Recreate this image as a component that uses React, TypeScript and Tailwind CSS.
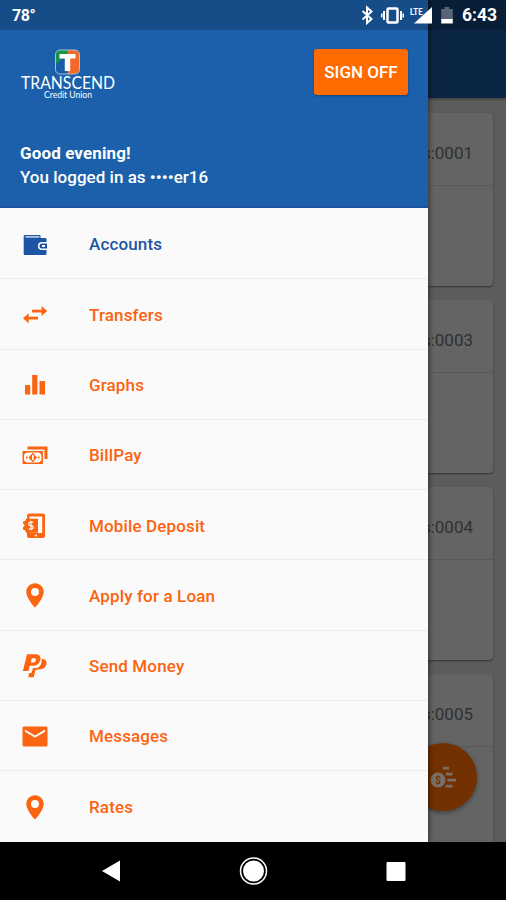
import type { ReactNode } from "react";

const accounts = [
  { id: "s:0001" },
  { id: "s:0003" },
  { id: "s:0004" },
  { id: "s:0005" },
];

function Icon({ children }: { children: ReactNode }) {
  return (
    <svg viewBox="0 0 28 28" className="h-7 w-7 shrink-0" fill="currentColor">
      {children}
    </svg>
  );
}

const Wallet = () => (
  <Icon>
    <path d="M4 4h14.500a1 1 0 0 1 1 1v2h5a1 1 0 0 1 1 1V11h-4.600a4 4 0 0 0 0 8h4.600v4a1 1 0 0 1-1 1H3.700a1 1 0 0 1-1-1V5.300A1.300 1.300 0 0 1 4 4Z" />
    <path d="M4.500 5.300h14v1.200h-14z" fill="#fafafa" />
    <path d="M21 12.500h5v5h-5a2.500 2.500 0 0 1 0-5Z" />
    <path d="M21 14h3v2h-3z" fill="#fafafa" />
  </Icon>
);

const Transfers = () => (
  <Icon>
    <path d="M11 9.300h9.500V5.700l5.700 5-5.700 5v-3.600H11zM17 16.400H7.700v-3.600L2 17.800l5.700 5v-3.600H17z" transform="translate(0 -.6)" />
  </Icon>
);

const Graphs = () => (
  <Icon>
    <path d="M4 14h5.200v9.500H4zM11.200 4h5.200v19.500h-5.200zM18.500 10H24v13.500h-5.500z" />
  </Icon>
);

const Bills = () => (
  <Icon>
    <path d="M6.500 4.500h20V17h-3V7.500h-17z" />
    <path d="M2.300 9.700h18.900v11.500H2.300z" fill="none" stroke="currentColor" strokeWidth="1.500" />
    <path d="M2 9.500h4.500L2 13.500zM21.500 9.500H17l4.500 4zM2 21.500h4.500l-4.500-4zM21.500 21.500H17l4.500-4z" />
    <path fillRule="evenodd" d="m11.800 10.800 4.300 4.700-4.300 4.700-4.300-4.700zM11 13v5h1.700v-5z" />
    <path d="M5 14.500h1.500v2H5zM17 14.500h1.500v2H17z" />
  </Icon>
);

const Deposit = () => (
  <Icon>
    <path fillRule="evenodd" d="M8 1.500h14a2 2 0 0 1 2 2V24a2 2 0 0 1-2 2H8a2 2 0 0 1-2-2V3.500a2 2 0 0 1 2-2Zm.5 3V21h12.700V4.500Z" />
    <path d="M5 6.700h12v14H5a3 3 0 0 0-3-3v-3a1.500 1.500 0 0 0 0-3V9.500a3 3 0 0 0 3-2.800Z" />
    <path d="M12.200 10.200H9.400a1.600 1.600 0 0 0 0 3.400h1a1.600 1.600 0 0 1 0 3.400H7.700M10 8.800v9.500" fill="none" stroke="#fafafa" strokeWidth="1.200" />
    <circle cx="15" cy="23.500" r="1" fill="#fafafa" />
  </Icon>
);

const Pin = () => (
  <Icon>
    <path fillRule="evenodd" d="M14 1.300c-4.800 0-8.700 3.800-8.700 8.600 0 6.600 8.700 15.600 8.700 15.600s8.700-9 8.700-15.600c0-4.800-3.900-8.600-8.700-8.600Zm0 4.700a4 4 0 1 1 0 8 4 4 0 0 1 0-8Z" />
  </Icon>
);

const PayPal = () => (
  <Icon>
    <path fillRule="evenodd" d="M6 2.200h8.500c4 0 5.600 2.300 4.900 5.600-.9 4.200-3.700 6-7.800 6H8.700L7.400 19H1.900ZM10.800 6.200l-.9 4.300h2c1.700 0 2.700-.7 3-2.200.3-1.400-.3-2.100-1.900-2.100Z" />
    <path d="M20.900 6.800c3.100.2 5.200 2.200 4.600 5-.8 4-3.500 5.700-7.600 5.700h-3.200l-2 7.800H7.200l1-4.300h2.200l1.700-5h2.800c3.700 0 6-3.600 6-9.200Z" />
  </Icon>
);

const Mail = () => (
  <Icon>
    <path fillRule="evenodd" d="M3 3.500h22a1.500 1.500 0 0 1 1.500 1.500v17a1.500 1.500 0 0 1-1.500 1.500H3A1.500 1.500 0 0 1 1.500 22V5A1.500 1.500 0 0 1 3 3.500Zm1 3v2.200l10 6.100 10-6.100V6.500l-10 6.100Z" />
  </Icon>
);

const menu = [
  { label: "Accounts", icon: <Wallet />, active: true },
  { label: "Transfers", icon: <Transfers /> },
  { label: "Graphs", icon: <Graphs /> },
  { label: "BillPay", icon: <Bills /> },
  { label: "Mobile Deposit", icon: <Deposit /> },
  { label: "Apply for a Loan", icon: <Pin /> },
  { label: "Send Money", icon: <PayPal /> },
  { label: "Messages", icon: <Mail /> },
  { label: "Rates", icon: <Pin /> },
];

function Logo() {
  return (
    <svg viewBox="0 0 96 54" className="h-[54px] w-24 overflow-visible" fill="white">
      <clipPath id="badge">
        <rect x="35.500" y="1" width="24" height="24" rx="4.500" />
      </clipPath>
      <g clipPath="url(#badge)">
        <path d="M35 0h13v26H35z" fill="#175ca9" />
        <path d="M35 0h13v5L35 16z" fill="#159447" />
        <path d="M47.500 0H60v26H47.500z" fill="#f26a2a" />
      </g>
      <rect x="35.500" y="1" width="24" height="24" rx="4.500" fill="none" stroke="#a9bfd5" />
      <path d="M39.500 5h16v4.500h-5.300V22h-5.400V9.500h-5.300z" />
      <text x="1" y="40" fontFamily="Lato, sans-serif" fontSize="17" textLength="94" lengthAdjust="spacingAndGlyphs">TRANSCEND</text>
      <text x="24" y="49" fontFamily="Lato, sans-serif" fontSize="9" textLength="48" lengthAdjust="spacingAndGlyphs">Credit Union</text>
    </svg>
  );
}

function StatusBar() {
  return (
    <div className="absolute inset-x-0 top-0 flex h-[30px] items-center bg-black/20 pl-3 pr-[9px] text-white">
      <span className="pt-0.5 text-[16px] font-bold tracking-tight">78°</span>
      <svg viewBox="0 0 96 22" className="ml-auto h-[22px] w-24" fill="white">
        <path d="m1.500 7 9 8-4.500 4V3.500l4.500 4-9 8" fill="none" stroke="white" strokeWidth="2" />
        <rect x="26.500" y="4.500" width="10" height="14" rx="1" fill="none" stroke="white" strokeWidth="2.500" />
        <path d="M22 7h2v9h-2zM39 7h2v9h-2zM20 9.500h1.500v4H20zM41.500 9.500H43v4h-1.500z" />
        <path d="M71 3v16.500H53z" />
        <text x="49" y="10.500" fontFamily="Roboto, sans-serif" fontSize="9" fontWeight="700" textLength="12.500" lengthAdjust="spacingAndGlyphs">LTE</text>
        <path d="M83.500 3h4.800v2h3.500v10H80.200V5h3.300z" fillOpacity=".32" />
        <path d="M80.200 15h11.600v4.500H80.200z" />
      </svg>
      <span className="ml-[5px] pt-0.5 text-[17.500px] font-bold leading-none">6:43</span>
    </div>
  );
}

function Drawer() {
  return (
    <aside className="absolute left-0 top-0 flex h-[842px] w-[428px] flex-col bg-[#fafafa] shadow-[1px_0_5px_rgba(0,0,0,0.55)]">
      <header className="flex h-[208px] flex-col border-b-2 border-[#17529a] bg-[#1c5faa] pl-5 pr-5 pt-[49px] text-white">
        <div className="flex h-[52px] items-start justify-between">
          <Logo />
          <button className="h-[46px] w-[94px] rounded-[3px] bg-[#ff6b00] pt-0.5 text-[17px] font-medium shadow-[0_1px_2px_rgba(0,0,0,0.3)]">SIGN OFF</button>
        </div>
        <div className="mt-10 text-[17px] leading-6">
          <p className="font-bold tracking-[0.12px]">Good evening!</p>
          <p className="font-medium tracking-[0.02px]">You logged in as ••••er16</p>
        </div>
      </header>
      <nav className="flex flex-col pt-px">
        {menu.map((item) => (
          <a
            key={item.label}
            className={`flex h-[70.3px] items-center border-b border-[#ececec] pl-[21px] pt-[2px] text-[17px] font-medium tracking-[0.14px] last:border-b-0 ${item.active ? "text-[#1c55a3]" : "text-[#fb6410]"}`}
          >
            {item.icon}
            <span className="ml-10 pt-px">{item.label}</span>
          </a>
        ))}
      </nav>
    </aside>
  );
}

function FloatingButton() {
  return (
    <div className="absolute left-[409px] top-[743px] flex h-[68px] w-[68px] items-center justify-center rounded-full bg-[#733000] shadow-[0_2px_5px_rgba(0,0,0,0.35)]">
      <svg viewBox="0 0 30 26" className="h-[26px] w-[30px]" fill="#777068">
        <circle cx="10" cy="16" r="7.500" />
        <path d="M15 2.700h6v2.800h-6zM18 8.700h6.500v2.800H18zM19.500 14.700H28v2.800h-8.500zM17.500 20.700h7v2.800h-7z" />
        <text x="7.200" y="19.600" fontFamily="Roboto, sans-serif" fontSize="10" fontWeight="700" fill="#733000">$</text>
      </svg>
    </div>
  );
}

export default function App() {
  return (
    <div className="relative flex h-[900px] w-[506px] flex-col overflow-hidden bg-[#5c5c5c] [font-family:Roboto,sans-serif]">
      <div className="h-[98px] shrink-0 bg-[#0b2645] shadow-[0_1px_3px_rgba(0,0,0,0.4)]" />
      <main className="flex h-[744px] shrink-0 flex-col gap-3.5 overflow-hidden px-[13px] pt-[15px]">
        {accounts.map((account) => (
          <section key={account.id} className="h-[173px] shrink-0 rounded-sm bg-[#646464] shadow-[0_1px_2px_rgba(0,0,0,0.45)]">
            <div className="flex h-[73px] items-center justify-end border-b border-[#595959] pr-5 pt-2.5 text-[17px] text-[#303030]">
              {account.id}
            </div>
          </section>
        ))}
      </main>
      <footer className="flex h-[58px] shrink-0 items-center bg-black">
        <svg viewBox="0 0 506 58" className="h-[58px] w-full" fill="white">
          <path d="M120 18.500v21L102 29z" />
          <circle cx="253.500" cy="29" r="10.500" />
          <circle cx="253.500" cy="29" r="13" fill="none" stroke="white" strokeWidth="1.500" />
          <rect x="386.500" y="20" width="19" height="19" rx="1" />
        </svg>
      </footer>
      <FloatingButton />
      <Drawer />
      <StatusBar />
    </div>
  );
}
